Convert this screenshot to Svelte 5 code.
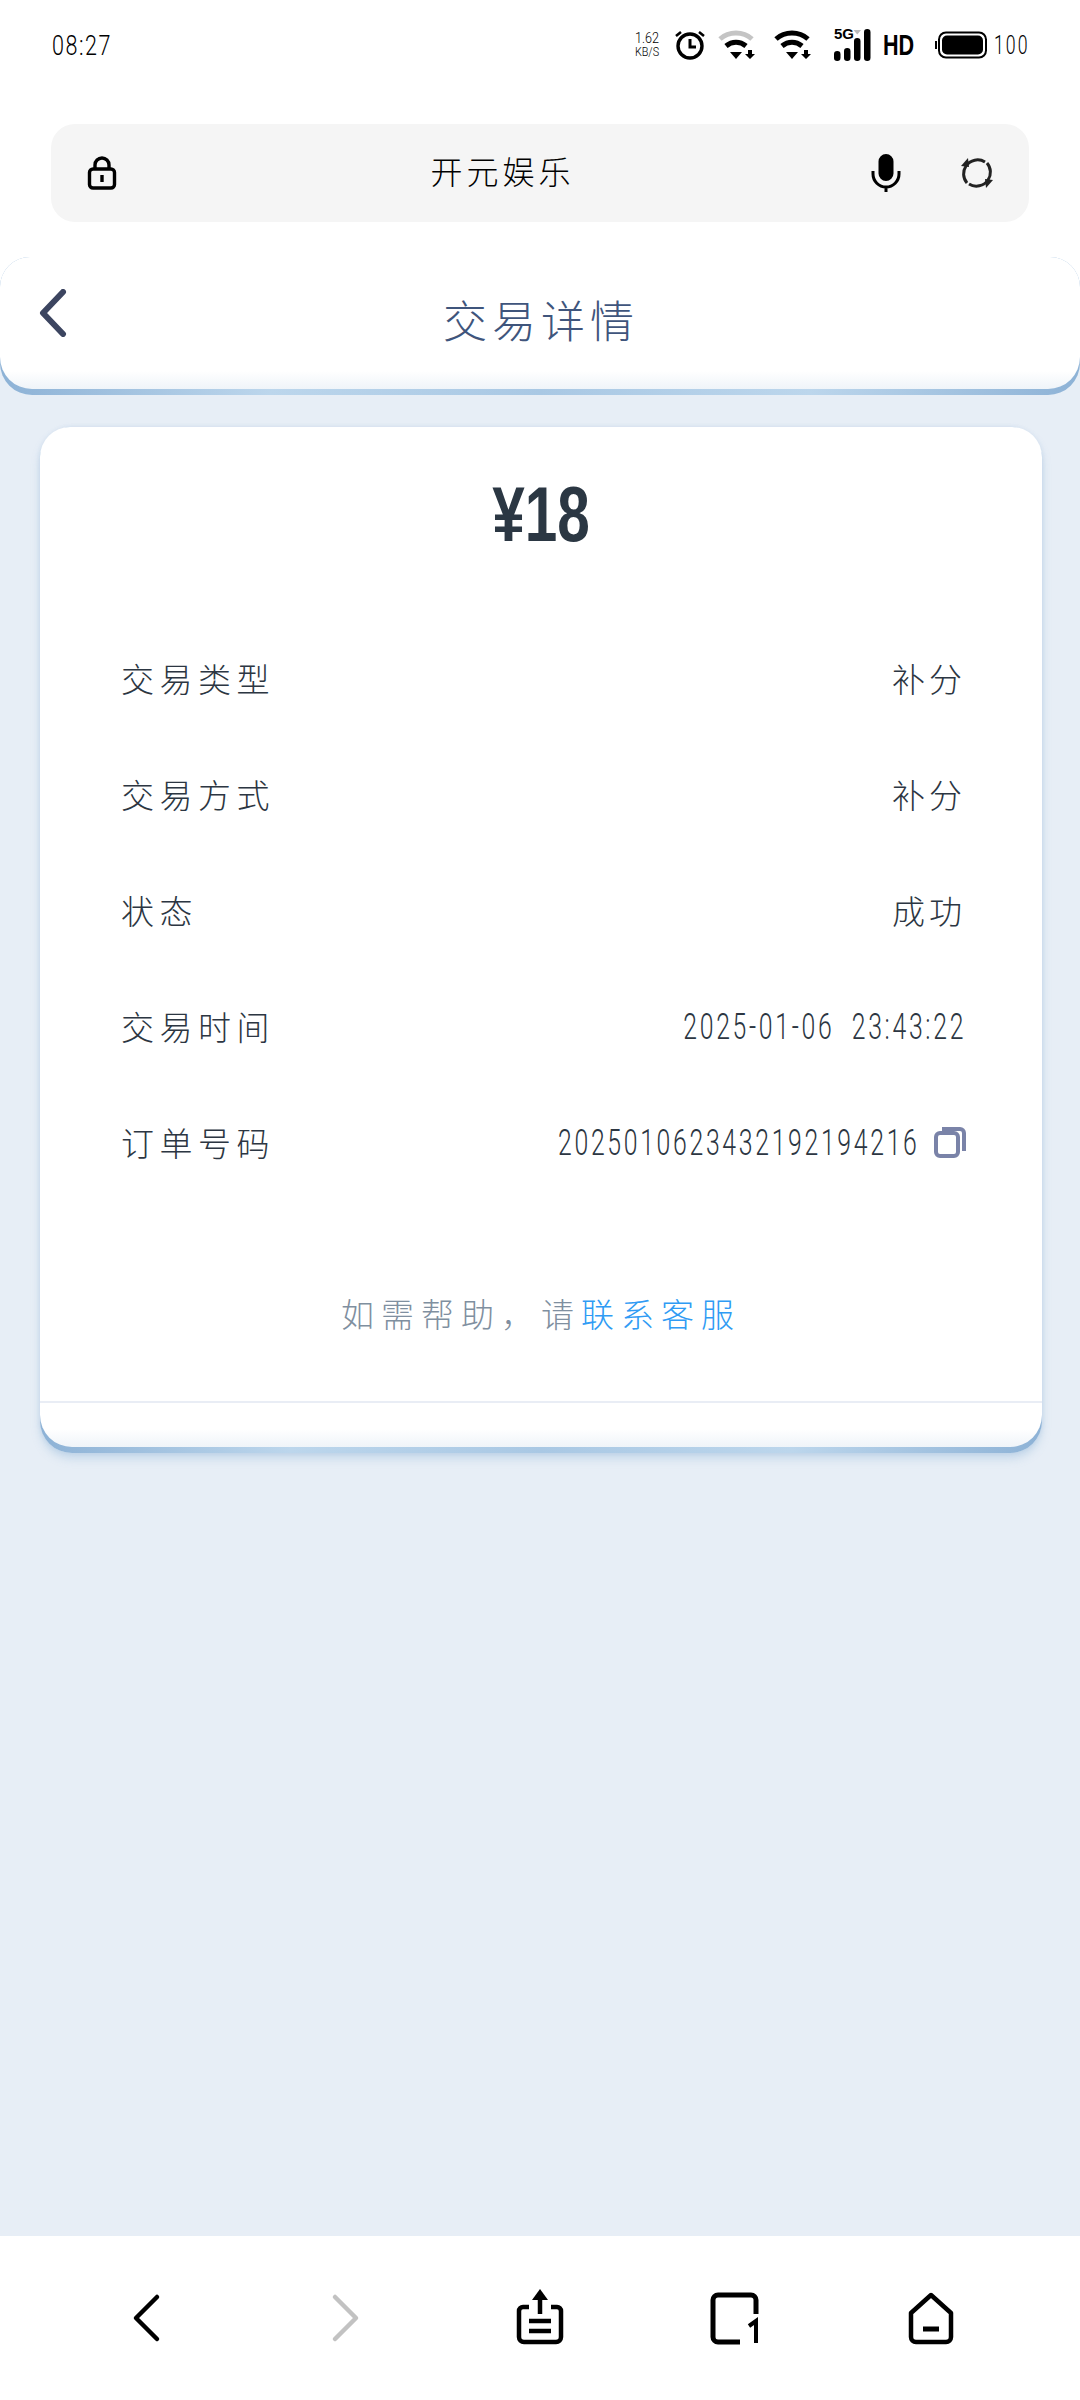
<script>
  const rows = [
    { label: '交易类型', value: '补分' },
    { label: '交易方式', value: '补分' },
    { label: '状态', value: '成功' },
    { label: '交易时间', value: '2025-01-06  23:43:22', digits: true },
    { label: '订单号码', value: '2025010623432192194216', digits: true, copy: true }
  ]
</script>

<div class="page">
  <div class="status">
    <span class="time">08:27</span>
    <div class="status-right">
      <div class="speed"><span>1.62</span><span>KB/S</span></div>
      <svg class="ic" width="34" height="34" viewBox="0 0 34 34" fill="none" stroke="#000">
        <circle cx="17" cy="18" r="12" stroke-width="3.4" />
        <path d="M17 11v8h6" stroke-width="3" />
        <path d="M3 8l5-4M31 8l-5-4" stroke-width="2.6" />
      </svg>
      <svg class="ic wifi" width="40" height="30" viewBox="0 0 40 30" fill="none">
        <path d="M2 9c9-8 23-8 32 0" stroke="#c4c4c4" stroke-width="5" />
        <path d="M8 16c6-5 14-5 20 0" stroke="#000" stroke-width="5" />
        <path d="M12 22h12l-6 7z" fill="#000" />
        <path d="M30 20h4v4h3l-5 5-5-5h3z" fill="#000" />
      </svg>
      <svg class="ic wifi2" width="40" height="30" viewBox="0 0 40 30" fill="none">
        <path d="M2 9c9-8 23-8 32 0" stroke="#000" stroke-width="5" />
        <path d="M8 16c6-5 14-5 20 0" stroke="#000" stroke-width="5" />
        <path d="M12 22h12l-6 7z" fill="#000" />
        <path d="M30 20h4v4h3l-5 5-5-5h3z" fill="#000" />
      </svg>
      <div class="signal">
        <span class="fiveg">5G</span>
        <svg width="38" height="32" viewBox="0 0 38 32">
          <rect x="0" y="22" width="6.500" height="10" rx="3.200" />
          <rect x="10" y="19" width="6.500" height="13" rx="3.200" />
          <rect x="20" y="9" width="6.500" height="23" rx="3.200" />
          <rect x="30" y="0" width="6.500" height="32" rx="3.200" />
          <path d="M19.500 1h7.500l-3.700 4.500z" fill="#bbb" />
        </svg>
      </div>
      <span class="hd">HD</span>
      <svg class="ic batt-ic" width="54" height="28" viewBox="0 0 54 28" fill="none">
        <rect x="5" y="1.500" width="47" height="25" rx="7" stroke="#000" stroke-width="2" />
        <rect x="8" y="4.500" width="41" height="19" rx="5" fill="#000" />
        <path d="M2 10v8" stroke="#000" stroke-width="2" />
      </svg>
      <span class="batt">100</span>
    </div>
  </div>

  <div class="urlbar">
    <svg width="30" height="34" viewBox="0 0 30 34" fill="none" stroke="#000" stroke-width="3.400">
      <rect x="2.500" y="13" width="25" height="19" rx="3.500" />
      <path d="M8 13V9a7 7 0 0 1 14 0v4" />
      <path d="M15 19v7" />
    </svg>
    <span class="url-title">开元娱乐</span>
    <svg class="mic" width="32" height="38" viewBox="0 0 32 38" fill="none" stroke="#000" stroke-width="3">
      <rect x="10" y="1.500" width="12" height="24" rx="6" fill="#000" />
      <path d="M3 17v3a13 13 0 0 0 26 0v-3M16 33v5" />
    </svg>
    <svg class="refresh" width="34" height="34" viewBox="0 0 34 34" fill="none" stroke="#222" stroke-width="3">
      <path d="M25 6a14 14 0 0 0-19 4a14 14 0 0 0 1 17" />
      <path d="M9 28a14 14 0 0 0 19-4a14 14 0 0 0-1-17" />
      <path d="M8 2l1 9-8-1zM26 32l-1-9 8 1z" fill="#222" stroke="none" />
    </svg>
  </div>

  <main class="content">
    <div class="raised header-wrap">
      <header class="raised-inner header">
        <svg class="back" width="30" height="48" viewBox="0 0 30 48" fill="none" stroke="#3c4560" stroke-width="6" stroke-linecap="round" stroke-linejoin="round">
          <path d="M26 3L6 24l20 21" />
        </svg>
        <h1>交易详情</h1>
      </header>
    </div>

    <div class="raised card-wrap">
      <section class="raised-inner card">
        <div class="amount">¥18</div>
        <div class="rows">
          {#each rows as row}
            <div class="row">
              <span class="label">{row.label}</span>
              <span class="value" class:digits={row.digits}>
                <span class="txt">{row.value}</span>
                {#if row.copy}
                  <svg class="copy" width="32" height="32" viewBox="0 0 32 32" fill="none" stroke="#7a83a8" stroke-width="4">
                    <rect x="2" y="7" width="22" height="23" rx="4" />
                    <path d="M8 3h18a4 4 0 0 1 4 4v18" />
                  </svg>
                {/if}
              </span>
            </div>
          {/each}
        </div>
        <p class="help">如需帮助，请<span>联系客服</span></p>
        <div class="card-foot"></div>
      </section>
    </div>
  </main>

  <nav class="bottom">
    <svg width="60" height="60" viewBox="0 0 60 60" fill="none" stroke="#000" stroke-width="4.500" stroke-linecap="round" stroke-linejoin="round">
      <path d="M39 9L18 30l21 21" />
    </svg>
    <svg width="60" height="60" viewBox="0 0 60 60" fill="none" stroke="#c2c2c2" stroke-width="4.500" stroke-linecap="round" stroke-linejoin="round">
      <path d="M21 9l21 21-21 21" />
    </svg>
    <svg width="60" height="60" viewBox="0 0 60 60" fill="none" stroke="#000" stroke-width="4.500">
      <path d="M19 19h-6a4 4 0 0 0-4 4v26a5 5 0 0 0 5 5h32a5 5 0 0 0 5-5V23a4 4 0 0 0-4-4h-6" />
      <path d="M30 26V9" />
      <path d="M30 1l8 11H22z" fill="#000" stroke="none" />
      <path d="M19 33h22M19 43h22" stroke-width="4.500" />
    </svg>
    <svg width="60" height="60" viewBox="0 0 60 60" fill="none" stroke="#000" stroke-width="4.500">
      <path d="M35 54H13a5 5 0 0 1-5-5V12a5 5 0 0 1 5-5h33a5 5 0 0 1 5 5v14" stroke-width="5" />
      <path d="M51 55V33l-7 5" stroke-width="4" />
    </svg>
    <svg width="60" height="60" viewBox="0 0 60 60" fill="none" stroke="#000" stroke-width="4.500" stroke-linejoin="round">
      <path d="M30 7L10 25v24a5 5 0 0 0 5 5h30a5 5 0 0 0 5-5V25z" />
      <path d="M22 41h16" stroke-width="5" />
    </svg>
  </nav>
</div>

<style>
  :global(body) {
    margin: 0;
    background: #fff;
  }

  .page {
    display: flex;
    flex-direction: column;
    height: 2400px;
    width: 1080px;
    overflow: hidden;
    font-family: "Noto Sans CJK SC", "Noto Sans", sans-serif;
    font-weight: 300;
    color: #2c3642;
  }

  .status {
    display: flex;
    align-items: center;
    justify-content: space-between;
    height: 90px;
    padding: 0 52px;
    box-sizing: border-box;
    color: #000;
    font-family: Roboto, sans-serif;
  }

  .time {
    font-size: 28px;
    letter-spacing: 2px;
    transform: scaleX(0.77);
    transform-origin: left;
  }

  .status-right {
    display: flex;
    align-items: center;
    gap: 11px;
    margin-right: -2px;
  }

  .speed {
    display: flex;
    flex-direction: column;
    align-items: center;
    width: 28px;
    font-size: 14px;
    line-height: 14px;
    margin-right: 1px;
    transform: scaleX(0.9);
  }

  .speed span:last-child {
    font-size: 12px;
  }

  .signal {
    display: flex;
    align-items: flex-end;
    position: relative;
    margin-left: 9px;
  }

  .fiveg {
    position: absolute;
    left: 0;
    top: -3px;
    font: 700 15px/15px "Liberation Sans", sans-serif;
  }

  .wifi2 {
    margin-left: 5px;
  }

  .hd {
    width: 32px;
    font: 700 30px/30px "Liberation Sans", sans-serif;
    transform: scaleX(0.72);
    transform-origin: left;
  }

  .batt-ic {
    margin-left: 8px;
  }

  .batt {
    width: 36px;
    font-size: 26px;
    letter-spacing: 3px;
    margin-left: -5px;
    transform: scaleX(0.68);
    transform-origin: left;
  }

  .urlbar {
    display: flex;
    align-items: center;
    height: 98px;
    margin: 34px 51px 0;
    padding: 0 35px 0 36px;
    box-sizing: border-box;
    background: #f5f5f5;
    border-radius: 24px;
    color: #000;
  }

  .url-title {
    flex: 1;
    text-align: center;
    font-size: 32px;
    line-height: 40px;
    letter-spacing: 4px;
    padding: 0 0 6px 18px;
  }

  .mic {
    margin-right: 58px;
  }

  .content {
    flex: 1;
    background: #e7eef6;
    margin-top: 35px;
    display: flex;
    flex-direction: column;
    position: relative;
  }

  .content::before {
    content: "";
    position: absolute;
    left: 0;
    right: 0;
    top: 0;
    height: 60px;
    background: #fff;
  }

  /* raised panels: blue strip along the bottom edge */
  .raised {
    position: relative;
    padding-bottom: 6px;
    background: linear-gradient(90deg, #8db2d6, #bcd6ec 25%, #a9c8e4 50%, #bcd6ec 75%, #8db2d6);
    border-radius: 0 0 32px 32px;
  }

  .raised-inner {
    background: linear-gradient(to top, #eff4f9, #fff 18px);
    border-radius: 30px 30px 32px 32px;
  }

  .header-wrap {
    height: 138px;
    box-sizing: border-box;
    border-top-left-radius: 30px;
    border-top-right-radius: 30px;
  }

  .header {
    display: flex;
    align-items: center;
    justify-content: center;
    height: 132px;
    position: relative;
  }

  .back {
    position: absolute;
    left: 37px;
    top: 32px;
  }

  h1 {
    margin: 0 0 9px 2px;
    font-size: 44px;
    font-weight: 300;
    letter-spacing: 5px;
    color: #3f557c;
  }

  .card-wrap {
    margin: 32px 38px 0 40px;
    box-shadow: 0 6px 8px rgba(140, 180, 215, 0.35), 0 0 4px rgba(170, 195, 225, 0.4);
    border-radius: 32px;
  }

  .card {
    height: 1020px;
    position: relative;
    display: flex;
    flex-direction: column;
  }

  .amount {
    margin-top: 49px;
    text-align: center;
    font: 700 78px/76px "Liberation Sans", sans-serif;
    color: #2b3743;
    transform: scaleX(0.75);
  }

  .rows {
    display: flex;
    flex-direction: column;
    gap: 76px;
    margin-top: 106px;
    padding: 0 76px 0 81px;
  }

  .row {
    display: flex;
    justify-content: space-between;
    align-items: center;
    height: 40px;
    font-size: 33px;
    letter-spacing: 5.5px;
  }

  .value {
    display: flex;
    align-items: center;
    letter-spacing: 4px;
  }

  .digits {
    font-family: Roboto, sans-serif;
    font-size: 37px;
    letter-spacing: 4px;
  }

  .digits .txt {
    white-space: pre;
    transform: scaleX(0.67);
    transform-origin: right;
  }

  .copy {
    margin-left: 14px;
  }

  .help {
    margin: 127px 0 0;
    text-align: center;
    font-size: 33px;
    letter-spacing: 7px;
    color: #7f8fa0;
  }

  .help span {
    color: #2f9bf4;
  }

  .card-foot {
    position: absolute;
    left: 0;
    right: 0;
    bottom: 44px;
    height: 2px;
    background: #e9edf5;
  }

  .bottom {
    display: flex;
    align-items: center;
    justify-content: space-between;
    height: 164px;
    padding: 0 119px 0 118px;
    background: #fff;
    box-sizing: border-box;
  }
</style>
